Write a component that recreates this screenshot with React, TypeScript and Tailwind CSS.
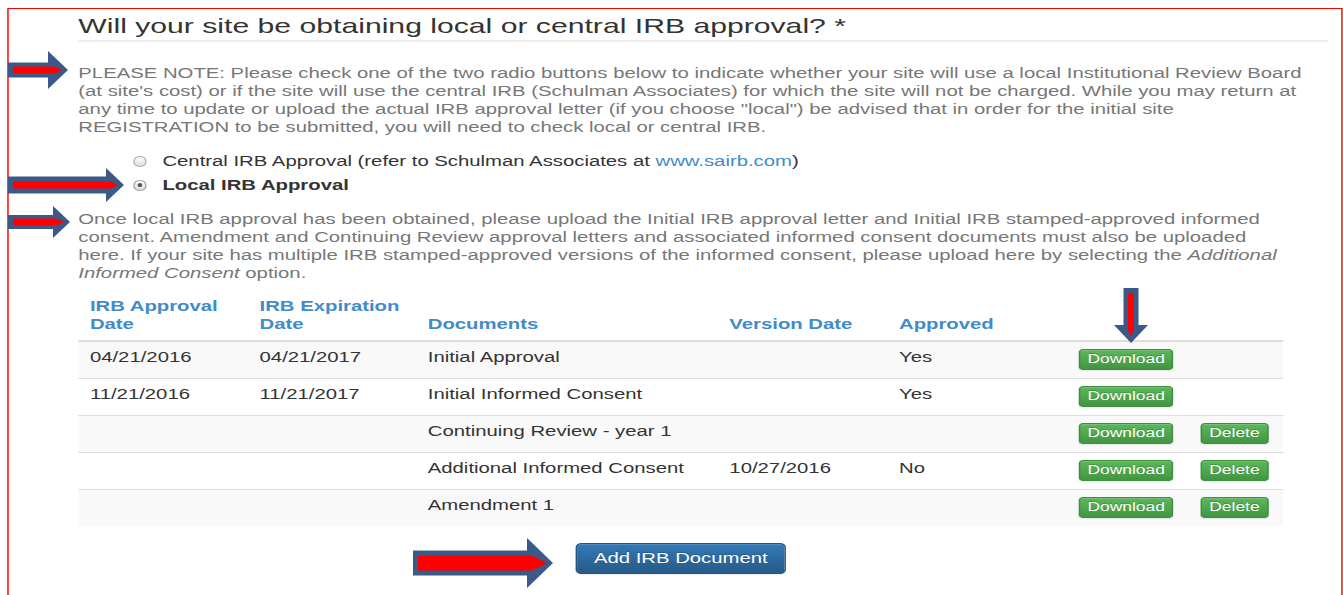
import React from "react";

type IrbRow = {
  approvalDate: string;
  expirationDate: string;
  document: string;
  versionDate: string;
  approved: string;
  canDelete: boolean;
};

const irbRows: IrbRow[] = [
  { approvalDate: "04/21/2016", expirationDate: "04/21/2017", document: "Initial Approval", versionDate: "", approved: "Yes", canDelete: false },
  { approvalDate: "11/21/2016", expirationDate: "11/21/2017", document: "Initial Informed Consent", versionDate: "", approved: "Yes", canDelete: false },
  { approvalDate: "", expirationDate: "", document: "Continuing Review - year 1", versionDate: "", approved: "", canDelete: true },
  { approvalDate: "", expirationDate: "", document: "Additional Informed Consent", versionDate: "10/27/2016", approved: "No", canDelete: true },
  { approvalDate: "", expirationDate: "", document: "Amendment 1", versionDate: "", approved: "", canDelete: true },
];

// Callout arrows: dark blue outline with a red bar inside
function RightArrow({ w, h, body, head, bar, className }: { w: number; h: number; body: number; head: number; bar: number; className: string }) {
  const top = (h - body) / 2;
  const bottom = (h + body) / 2;
  const hx = w - head;
  const outline = `0,${top} ${hx},${top} ${hx},0 ${w},${h / 2} ${hx},${h} ${hx},${bottom} 0,${bottom}`;
  const y1 = (h - bar) / 2;
  const y2 = (h + bar) / 2;
  const tip = w - 6;
  const red = `5,${y1} ${tip - bar},${y1} ${tip},${h / 2} ${tip - bar},${y2} 5,${y2}`;
  return (
    <svg className={className} width={w} height={h} viewBox={`0 0 ${w} ${h}`}>
      <polygon points={outline} fill="#3b5a87" />
      <polygon points={red} fill="#ff0000" />
    </svg>
  );
}

function DownArrow({ className }: { className: string }) {
  return (
    <svg className={className} width={34} height={55} viewBox="0 0 34 55">
      <polygon points="9.5,0 24.5,0 24.5,37 34,37 17,55 0,37 9.5,37" fill="#3b5a87" />
      <polygon points="14,5 20,5 20,42 17,48 14,42" fill="#ff0000" />
    </svg>
  );
}

function SmallButton({ label }: { label: string }) {
  return (
    <button
      type="button"
      className="block rounded-[3px] border border-[#3e8f3e] bg-linear-to-b from-[#5cb85c] to-[#419641] px-[5px] py-[1px] text-[12px] leading-[17px] text-white shadow-[inset_0_1px_0_rgba(255,255,255,0.15),0_1px_1px_rgba(0,0,0,0.075)] [text-shadow:0_-1px_0_rgba(0,0,0,0.2)]"
    >
      {label}
    </button>
  );
}

export default function App() {
  return (
    <div className="relative h-[595px] w-[1343px] overflow-hidden bg-white font-['Liberation_Sans',Arial,sans-serif]">
      <div className="w-[926px] origin-top-left scale-x-[1.45]">
        <div className="ml-[5px] mt-2 border border-[#ff0000] pb-16 pl-[48px] pr-[9px] pt-[5px]">
          <h3 className="border-b-2 border-[#eee] pb-[2px] text-[20.8px] leading-[24px] text-[#333]">
            Will your site be obtaining local or central IRB approval? *
          </h3>

          <p className="mt-[22px] text-[14px] leading-[18px] text-[#777]">
            PLEASE NOTE: Please check one of the two radio buttons below to indicate whether your site will use a local
            Institutional Review Board (at site's cost) or if the site will use the central IRB (Schulman Associates) for
            which the site will not be charged. While you may return at any time to update or upload the actual IRB
            approval letter (if you choose "local") be advised that in order for the initial site REGISTRATION to be
            submitted, you will need to check local or central IRB.
          </p>

          {/* IRB type */}
          <div className="ml-[38px] mt-[13px] text-[14px] text-[#333]">
            <label className="flex items-center gap-[11px] leading-[24px]">
              <span className="h-[11px] w-[9px] rounded-full border border-[#b5b5b5] bg-linear-to-b from-white to-[#dcdcdc]" />
              <span>
                Central IRB Approval (refer to Schulman Associates at <a className="text-[#428bca]">www.sairb.com</a>)
              </span>
            </label>
            <label className="flex items-center gap-[11px] font-bold leading-[24px]">
              <span className="flex h-[11px] w-[9px] items-center justify-center rounded-full border border-[#a8a8a8] bg-linear-to-b from-white to-[#dcdcdc]">
                <span className="h-[4px] w-[3px] rounded-full bg-[#555]" />
              </span>
              <span>Local IRB Approval</span>
            </label>
          </div>

          <p className="mt-[13px] text-[14px] leading-[18px] text-[#777]">
            Once local IRB approval has been obtained, please upload the Initial IRB approval letter and Initial IRB
            stamped-approved informed consent. Amendment and Continuing Review approval letters and associated informed
            consent documents must also be uploaded
            <br />
            here. If your site has multiple IRB stamped-approved versions of the informed consent, please upload here by
            selecting the <em>Additional Informed Consent</em> option.
          </p>

          <table className="mt-[7px] w-[831px] table-fixed border-collapse text-left text-[14px] text-[#333]">
            <colgroup>
              <col className="w-[117px]" />
              <col className="w-[116px]" />
              <col className="w-[208px]" />
              <col className="w-[117px]" />
              <col className="w-[124px]" />
              <col className="w-[84px]" />
              <col className="w-[65px]" />
            </colgroup>
            <thead>
              <tr className="align-bottom font-bold leading-[18px] text-[#428bca]">
                <th className="border-b-2 border-[#ddd] px-2 pb-[7px] pt-2">IRB Approval Date</th>
                <th className="border-b-2 border-[#ddd] px-2 pb-[7px] pt-2">IRB Expiration Date</th>
                <th className="border-b-2 border-[#ddd] px-2 pb-[7px] pt-2">Documents</th>
                <th className="border-b-2 border-[#ddd] px-2 pb-[7px] pt-2">Version Date</th>
                <th className="border-b-2 border-[#ddd] px-2 pb-[7px] pt-2">Approved</th>
                <th className="border-b-2 border-[#ddd] px-2 pb-[7px] pt-2"></th>
                <th className="border-b-2 border-[#ddd] px-2 pb-[7px] pt-2"></th>
              </tr>
            </thead>
            <tbody>
              {irbRows.map((row, i) => (
                <tr key={i} className={`align-top leading-[20px] ${i % 2 === 0 ? "bg-[#f9f9f9]" : "bg-white"}`}>
                  <td className="border-t border-[#ddd] px-2 pb-[11px] pt-[5px]">{row.approvalDate}</td>
                  <td className="border-t border-[#ddd] px-2 pb-[11px] pt-[5px]">{row.expirationDate}</td>
                  <td className="border-t border-[#ddd] px-2 pb-[11px] pt-[5px]">{row.document}</td>
                  <td className="border-t border-[#ddd] px-2 pb-[11px] pt-[5px]">{row.versionDate}</td>
                  <td className="border-t border-[#ddd] px-2 pb-[11px] pt-[5px]">{row.approved}</td>
                  <td className="border-t border-[#ddd] px-2 pb-[8px] pt-[7px]">
                    <SmallButton label="Download" />
                  </td>
                  <td className="border-t border-[#ddd] px-2 pb-[8px] pt-[7px]">
                    {row.canDelete && <SmallButton label="Delete" />}
                  </td>
                </tr>
              ))}
            </tbody>
          </table>

          <div className="mt-[17px] flex w-[831px] justify-center">
            <button
              type="button"
              className="rounded border border-[#245580] bg-linear-to-b from-[#337ab7] to-[#265a88] px-3 py-[5px] text-[14px] leading-[19px] text-white shadow-[inset_0_1px_0_rgba(255,255,255,0.15),0_1px_1px_rgba(0,0,0,0.075)] [text-shadow:0_-1px_0_rgba(0,0,0,0.2)]"
            >
              Add IRB Document
            </button>
          </div>
        </div>
      </div>

      <RightArrow className="absolute left-[8px] top-[51px]" w={60} h={38} body={15} head={20} bar={7} />
      <RightArrow className="absolute left-[8px] top-[168px]" w={116} h={34} body={17} head={18} bar={7} />
      <RightArrow className="absolute left-[8px] top-[206px]" w={62} h={32} body={14} head={17} bar={7} />
      <DownArrow className="absolute left-[1114px] top-[288px]" />
      <RightArrow className="absolute left-[413px] top-[538px]" w={140} h={50} body={25} head={26} bar={15} />
    </div>
  );
}
